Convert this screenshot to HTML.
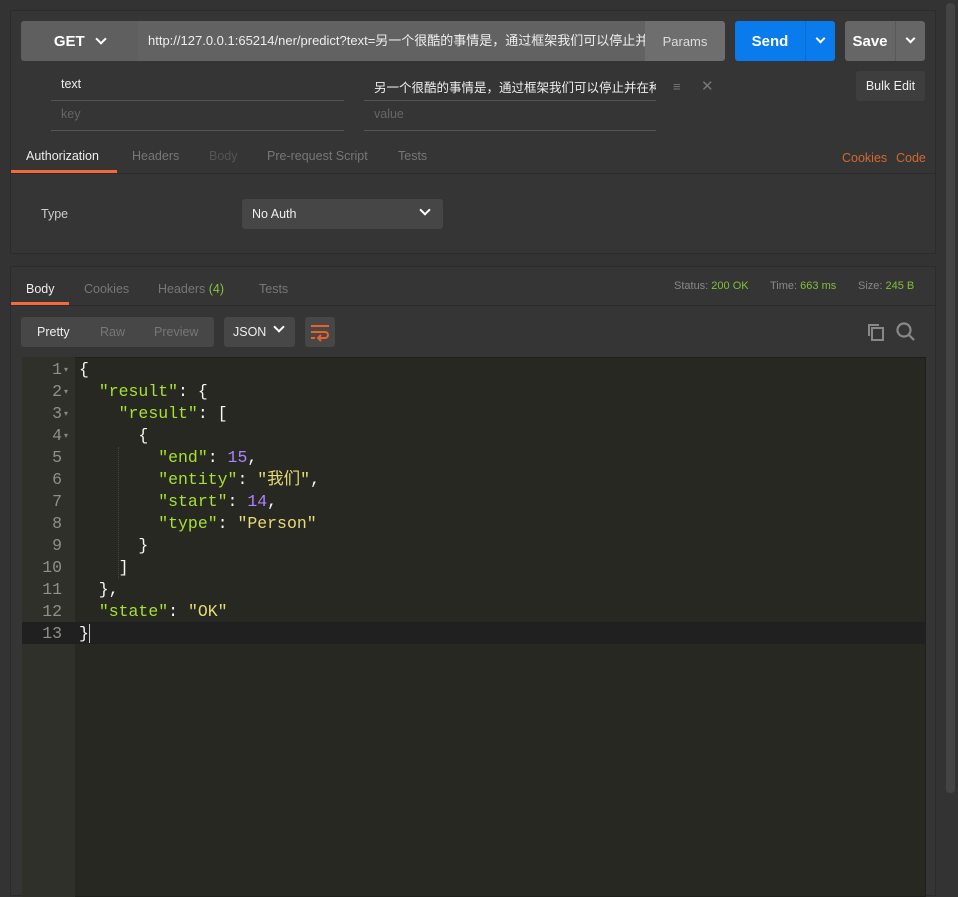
<!DOCTYPE html>
<html><head><meta charset="utf-8"><style>
*{box-sizing:border-box;margin:0;padding:0}
body{width:958px;height:887px;background:#333;font-family:"Liberation Sans","Noto Sans CJK SC",sans-serif;position:relative;overflow:hidden;color:#ddd;font-size:13px}
.abs{position:absolute}
.panel{position:absolute;left:10px;width:926px;background:#353535;border:1px solid #2b2b2b}
.btn{position:absolute;border-radius:3px;display:flex;align-items:center;justify-content:center;font-weight:bold}
.chev{display:inline-block;width:8px;height:8px;border-right:2px solid #fff;border-bottom:2px solid #fff;transform:rotate(45deg);margin-top:-5px}
.tab{position:absolute;font-size:12.5px;color:#777}
.code{font-family:"Liberation Mono","Noto Sans CJK SC",monospace;font-size:16.5px;line-height:22px;white-space:pre}
.k{color:#a6e22e}.s{color:#e6db74}.n{color:#ae81ff}.p{color:#f8f8f2}
</style></head><body>
<div class="panel" style="top:10px;height:244px"></div>
<div class="panel" style="top:266px;height:630px"></div>
<div class="abs" style="left:946px;top:3px;width:9px;height:790px;background:#444;border-radius:4px"></div>

<!-- URL bar -->
<div class="btn" style="left:21px;top:21px;width:117px;height:40px;background:#5f5f5f;border-radius:3px 0 0 3px;color:#fff;font-size:15px">GET&nbsp;&nbsp;&nbsp;<span class="chev"></span></div>
<div class="abs" style="left:138px;top:21px;width:507px;height:40px;background:#626262;color:#eee;font-size:13px;line-height:40px;padding-left:10px;white-space:nowrap;overflow:hidden">http://127.0.0.1:65214/ner/predict?text=另一个很酷的事情是，通过框架我们可以停止并在种</div>
<div class="btn" style="left:645px;top:21px;width:80px;height:40px;background:#6e6e6e;border-radius:0 3px 3px 0;color:#ddd;font-size:13px;font-weight:normal">Params</div>
<div class="btn" style="left:735px;top:21px;width:70px;height:40px;background:#097bed;border-radius:3px 0 0 3px;color:#fff;font-size:15px">Send</div>
<div class="btn" style="left:805px;top:21px;width:30px;height:40px;background:#097bed;border-left:1px solid #0a6bd0;border-radius:0 3px 3px 0"><span class="chev" style="width:7px;height:7px"></span></div>
<div class="btn" style="left:845px;top:21px;width:50px;height:40px;background:#666;border-radius:3px 0 0 3px;color:#fff;font-size:15px">Save</div>
<div class="btn" style="left:895px;top:21px;width:30px;height:40px;background:#666;border-left:1px solid #585858;border-radius:0 3px 3px 0"><span class="chev" style="width:7px;height:7px"></span></div>

<!-- params -->
<div class="abs" style="left:51px;top:77px;width:293px;height:24px;border-bottom:1px solid #555;color:#eee;font-size:12.5px;padding-left:10px">text</div>
<div class="abs" style="left:51px;top:107px;width:293px;height:24px;border-bottom:1px solid #555;color:#666;font-size:12.5px;padding-left:10px">key</div>
<div class="abs" style="left:364px;top:77px;width:292px;height:24px;border-bottom:1px solid #555;color:#eee;font-size:12.5px;padding-left:10px;white-space:nowrap;overflow:hidden">另一个很酷的事情是，通过框架我们可以停止并在种</div>
<div class="abs" style="left:364px;top:107px;width:292px;height:24px;border-bottom:1px solid #555;color:#666;font-size:12.5px;padding-left:10px">value</div>
<div class="abs" style="left:673px;top:79px;color:#777;font-size:13px">≡</div>
<div class="abs" style="left:701px;top:77px;color:#777;font-size:15px">✕</div>
<div class="btn" style="left:856px;top:71px;width:69px;height:30px;background:#3e3e3e;color:#eee;font-size:12.5px;font-weight:normal">Bulk Edit</div>

<!-- tabs -->
<div class="tab" style="left:26px;top:149px;color:#eee">Authorization</div>
<div class="abs" style="left:11px;top:170px;width:106px;height:3px;background:#f26b3a"></div>
<div class="abs" style="left:11px;top:173px;width:924px;height:1px;background:#2b2b2b"></div>
<div class="tab" style="left:132px;top:149px">Headers</div>
<div class="tab" style="left:209px;top:149px;color:#555">Body</div>
<div class="tab" style="left:267px;top:149px">Pre-request Script</div>
<div class="tab" style="left:398px;top:149px">Tests</div>
<div class="tab" style="left:842px;top:151px;color:#d2692f">Cookies</div>
<div class="tab" style="left:896px;top:151px;color:#d2692f">Code</div>
<div class="tab" style="left:41px;top:207px;color:#ccc">Type</div>
<div class="abs" style="left:242px;top:199px;width:201px;height:30px;background:#464646;border-radius:3px;color:#eee;font-size:12.5px;line-height:30px;padding-left:10px">No Auth<span class="chev" style="position:absolute;right:14px;top:12px;width:8px;height:8px"></span></div>

<!-- response tabs -->
<div class="tab" style="left:26px;top:282px;color:#eee">Body</div>
<div class="abs" style="left:11px;top:302px;width:58px;height:3px;background:#f26b3a"></div>
<div class="abs" style="left:11px;top:305px;width:924px;height:1px;background:#2b2b2b"></div>
<div class="tab" style="left:84px;top:282px">Cookies</div>
<div class="tab" style="left:158px;top:282px">Headers <span style="color:#84c43a">(4)</span></div>
<div class="tab" style="left:259px;top:282px">Tests</div>
<div class="abs" style="left:674px;top:280px;font-size:11px;color:#888">Status: <b style="color:#7fc137;font-weight:normal">200 OK</b></div>
<div class="abs" style="left:770px;top:280px;font-size:11px;color:#888">Time: <b style="color:#7fc137;font-weight:normal">663 ms</b></div>
<div class="abs" style="left:858px;top:280px;font-size:11px;color:#888">Size: <b style="color:#7fc137;font-weight:normal">245 B</b></div>

<!-- toolbar -->
<div class="abs" style="left:21px;top:317px;width:193px;height:30px;background:#474747;border-radius:3px"></div>
<div class="tab" style="left:37px;top:325px;color:#eee">Pretty</div>
<div class="tab" style="left:100px;top:325px;color:#777">Raw</div>
<div class="tab" style="left:154px;top:325px;color:#777">Preview</div>
<div class="abs" style="left:224px;top:317px;width:71px;height:30px;background:#474747;border-radius:3px;color:#eee;font-size:12.5px;line-height:30px;padding-left:9px">JSON<span class="chev" style="position:absolute;right:12px;top:11px;width:8px;height:8px"></span></div>
<div class="abs" style="left:305px;top:317px;width:30px;height:30px;background:#474747;border-radius:3px">
<svg width="30" height="30"><g stroke="#e8622a" stroke-width="2" fill="none"><path d="M6 9h18M6 15h14a3 3 0 0 1 0 6h-6M6 21h4"/><path d="M16 18l-3 3 3 3"/></g></svg></div>
<svg class="abs" style="left:866px;top:322px" width="20" height="20"><g stroke="#888" stroke-width="2" fill="none"><rect x="6" y="6" width="11" height="12"/><path d="M3 14V3h10"/></g></svg>
<svg class="abs" style="left:896px;top:322px" width="20" height="20"><g stroke="#888" stroke-width="2.2" fill="none"><circle cx="8" cy="8" r="6.5"/><path d="M13 13l5 5"/></g></svg>

<!-- editor -->
<div class="abs" style="left:22px;top:357px;width:904px;height:540px;background:#272822;border:1px solid #1f1f1c"></div>
<div class="abs" style="left:22px;top:357px;width:53px;height:540px;background:#2f3029"></div>
<div class="abs" style="left:22px;top:622px;width:904px;height:22px;background:#202020"></div>
<div class="abs code" style="left:22px;top:359px;width:40px;text-align:right;color:#8f908a">1
2
3
4
5
6
7
8
9
10
11
12
13</div>
<div class="abs" style="left:64px;top:359px;font-size:8px;line-height:22px;color:#888;white-space:pre">▾
▾
▾
▾</div>
<div class="abs" style="left:118px;top:447px;height:132px;border-left:1px dotted #444"></div>
<div class="abs code p" style="left:79px;top:359px">{
  <span class="k">"result"</span>: {
    <span class="k">"result"</span>: [
      {
        <span class="k">"end"</span>: <span class="n">15</span>,
        <span class="k">"entity"</span>: <span class="s">"我们"</span>,
        <span class="k">"start"</span>: <span class="n">14</span>,
        <span class="k">"type"</span>: <span class="s">"Person"</span>
      }
    ]
  },
  <span class="k">"state"</span>: <span class="s">"OK"</span>
}</div>
<div class="abs" style="left:89px;top:624px;width:1px;height:19px;background:#ccc"></div>
</body></html>
